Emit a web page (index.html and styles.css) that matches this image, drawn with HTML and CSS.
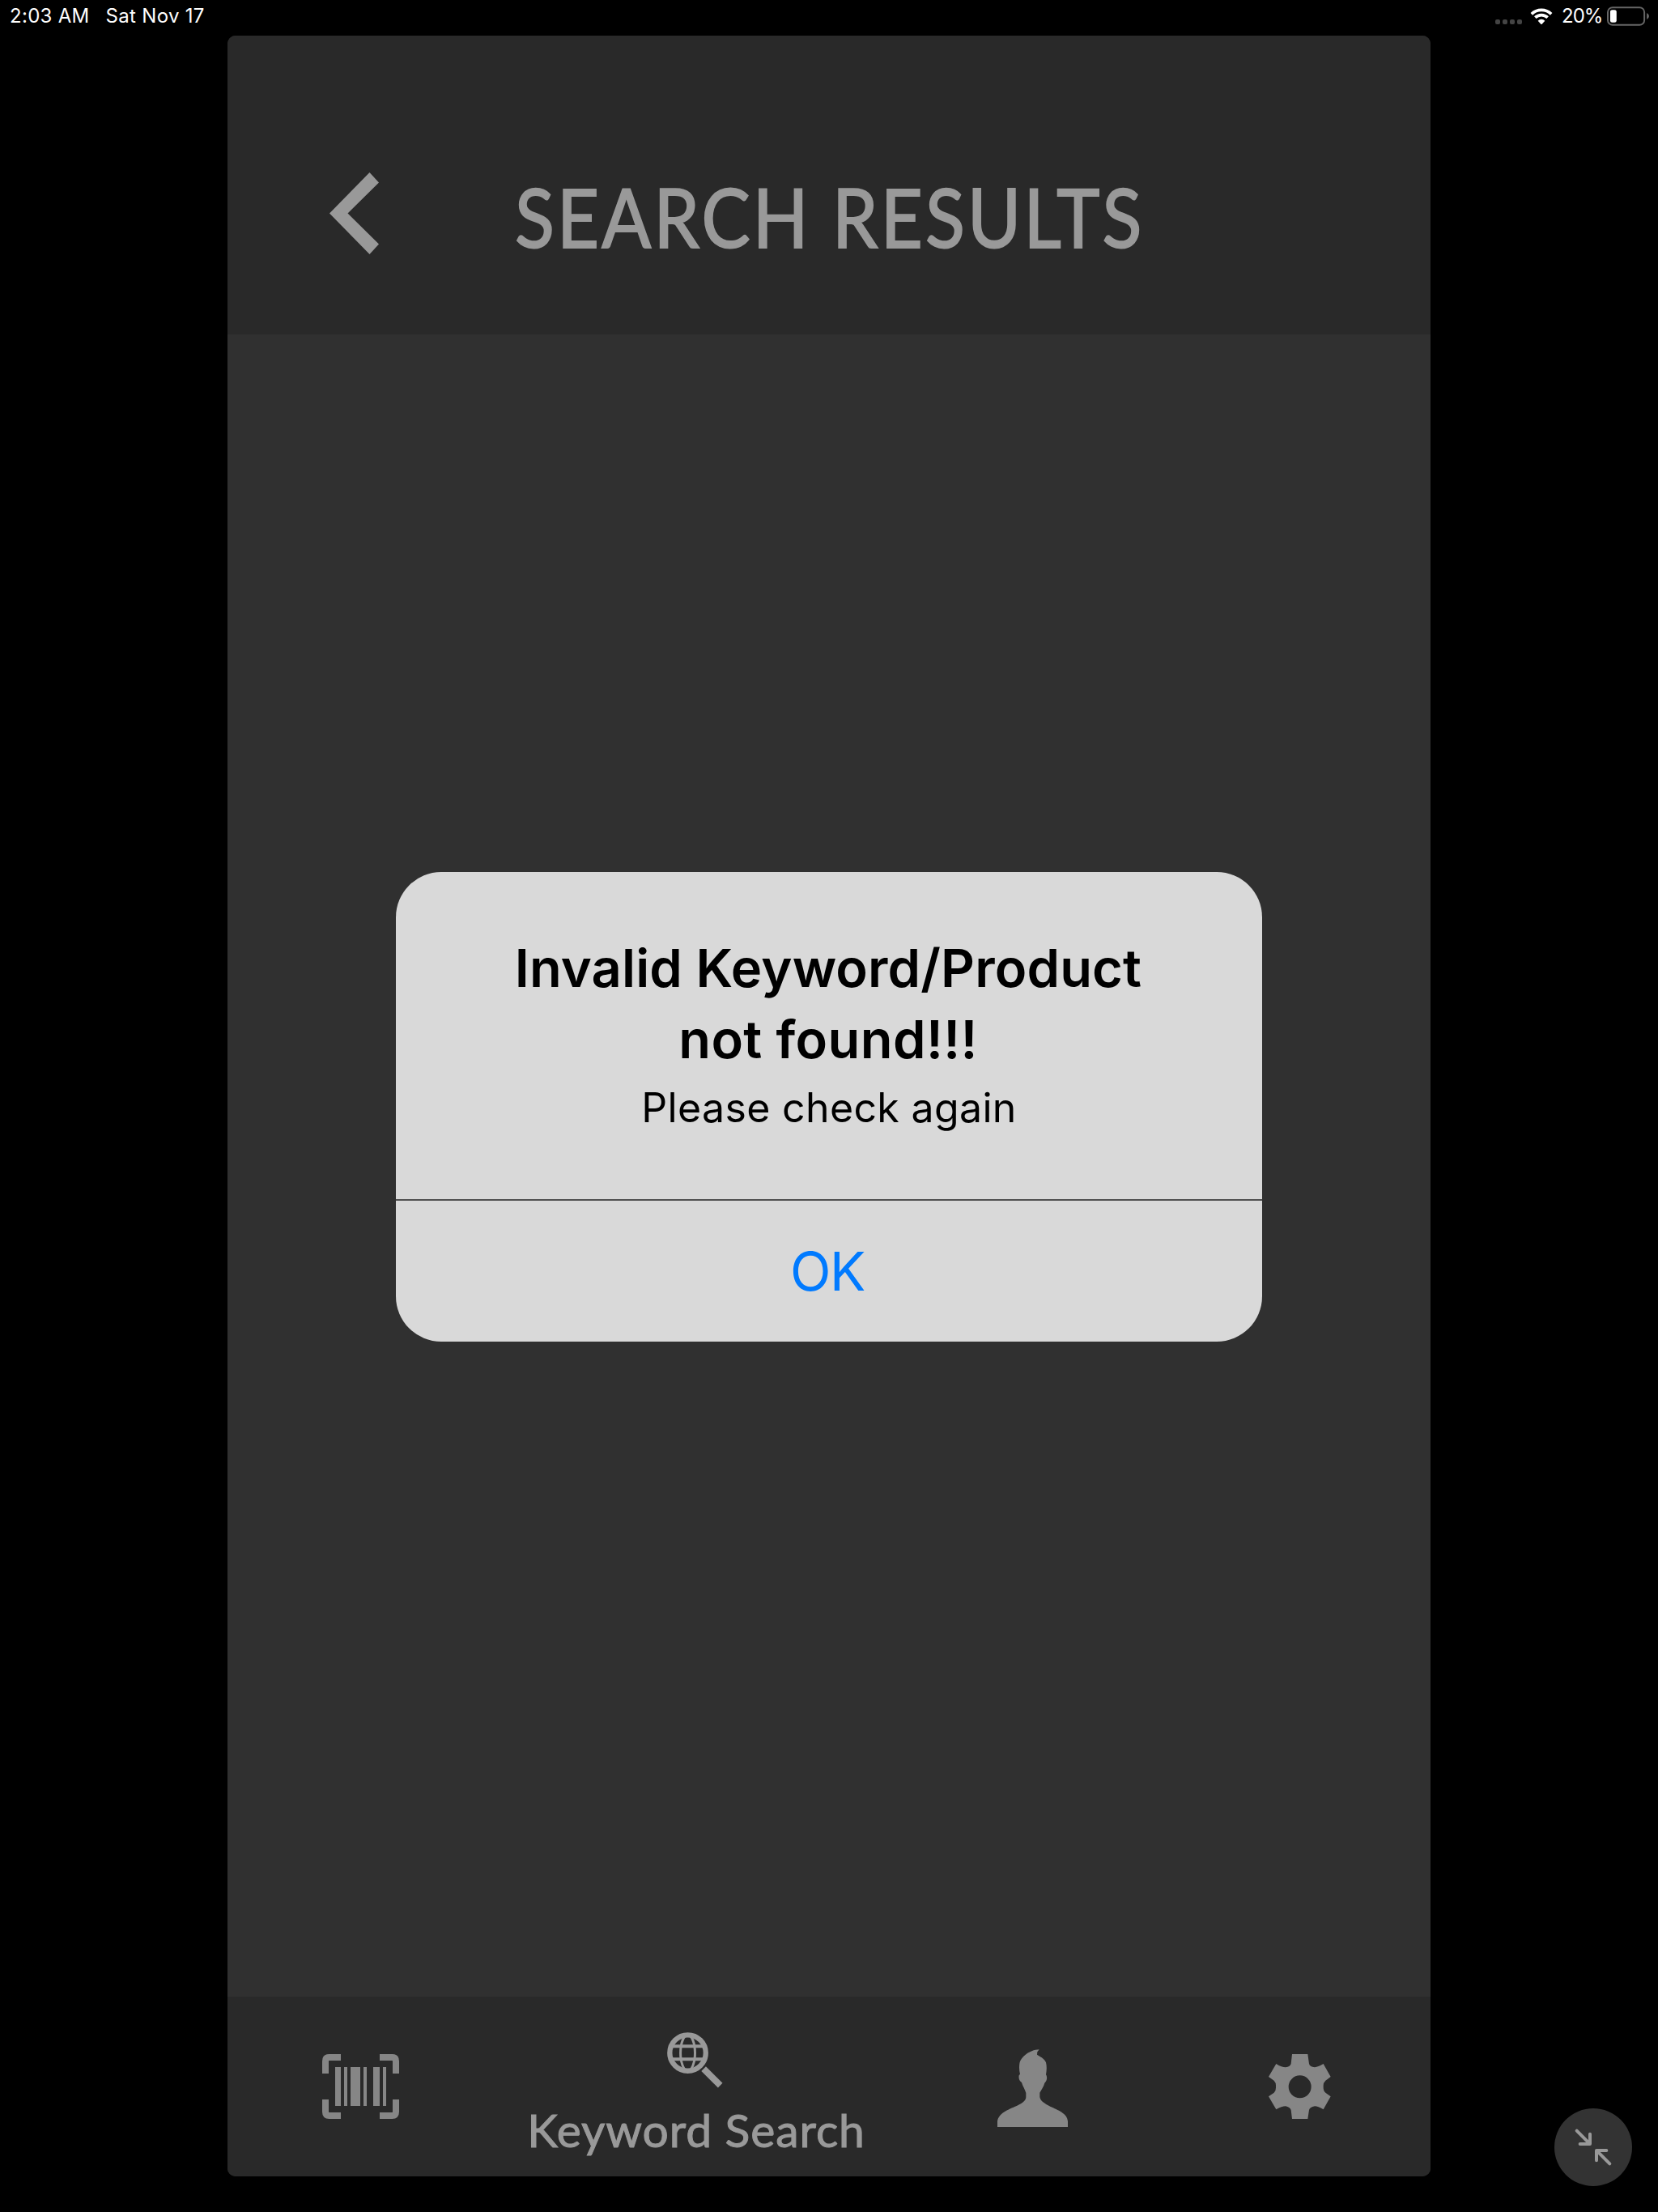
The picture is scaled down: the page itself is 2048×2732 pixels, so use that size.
FILE: index.html
```html
<!DOCTYPE html>
<html lang="en">
<head>
<meta charset="utf-8">
<title>Search Results</title>
<link rel="stylesheet" href="styles.css">
</head>
<body>
<div class="status">
  <span class="status-time">2:03 AM</span>
  <span class="status-date">Sat Nov 17</span>
  <svg class="signal" viewBox="0 0 33 6"><rect width="6" height="6" rx="2"/><rect x="9" width="6" height="6" rx="2"/><rect x="18" width="6" height="6" rx="2"/><rect x="27" width="6" height="6" rx="2"/></svg>
  <svg class="wifi" viewBox="210 30 84 60"><path class="wifi-arc" d="M215.5 52A52 52 0 0 1 288.500 52M229 65A33 33 0 0 1 275 65"/><path class="wifi-dot" d="M239 77A18 18 0 0 1 265 77L254 89Q252 91 250 89Z"/></svg>
  <span class="status-battery">20%</span>
  <svg class="battery" viewBox="0 0 54 24"><rect class="battery-shell" x="1" y="1" width="46" height="22" rx="6"/><rect class="battery-level" x="4" y="4" width="8" height="16" rx="2.500"/><path class="battery-cap" d="M50 8Q53 9.500 53 12T50 16Z"/></svg>
</div>

<div class="app">
  <header class="header">
    <svg class="back" viewBox="0 0 61 101"><path d="M49.500 0L61 12.500L22.500 50.500L61 88.500L49.500 101L0 50.500Z"/></svg>
    <h1 class="title">SEARCH RESULTS</h1>
  </header>
  <main class="content"></main>
  <nav class="tabs">
    <div class="tab">
      <svg class="icon-barcode" viewBox="54 111 285 240"><path class="frame" d="M123 123H80Q66 123 66 137V183M267 123H313Q327 123 327 137V183M66 279V325Q66 339 80 339H123M327 279V325Q327 339 313 339H267"/><path d="M102 159h21v144h-21zM135 159h12v144h-12zM159 159h36v144h-36zM207 159h12v144h-12zM243 159h24v144h-24zM279 159h12v144h-12z"/></svg>
    </div>
    <div class="tab tab-active">
      <svg class="icon-search" viewBox="581 179 208 208"><circle cx="658" cy="256" r="67" stroke-width="19"/><path d="M594 231H722M594 279H722" stroke-width="12"/><ellipse cx="658" cy="256" rx="27" ry="67" stroke-width="9"/><path d="M717 315L779 377" stroke-width="24"/></svg>
      <span class="tab-label">Keyword Search</span>
    </div>
    <div class="tab">
      <svg class="icon-person" viewBox="66 63 261 288"><path d="M66 351V330C70 300 108 286 130 276C155 265 172 255 172 240V225C168 212 160 200 156 186C148 182 144 172 146 160L150 155C146 140 146 120 150 108C158 88 185 70 207 65L221 64L214 73L213 83C228 92 240 98 246 112C250 128 248 145 246 157C252 165 250 180 241 188C238 200 230 212 223 224V240C226 256 240 263 262 275C290 288 325 300 327 330V351Z"/></svg>
    </div>
    <div class="tab">
      <svg class="icon-gear" viewBox="79 80 231 240"><path fill-rule="evenodd" d="M166 80H224L229 116Q232 127 250 129Q262 127 282 116L309 164L290 178Q281 186 282 200Q281 216 290 223L309 237L282 285Q262 273 250 273Q232 276 229 287L224 320H166L162 287Q158 276 142 273Q128 273 107 285L79 237L99 223Q107 216 106 200Q107 186 99 178L79 164L107 116Q128 129 142 129Q158 127 162 116ZM195 159A42 42 0 1 0 195 243A42 42 0 1 0 195 159Z"/></svg>
    </div>
  </nav>

  <div class="overlay">
    <div class="alert" role="alertdialog">
      <div class="alert-body">
        <h2 class="alert-title">Invalid Keyword/Product<br><span class="alert-title-end">not found!!!</span></h2>
        <p class="alert-message">Please check again</p>
      </div>
      <button class="alert-ok">OK</button>
    </div>
  </div>
</div>

<svg class="collapse" viewBox="60 42 288 288"><circle cx="204" cy="186" r="144"/><path d="M143 125L190 172M192 137V174H155M216 235V198H253M218 200L265 247"/></svg>
</body>
</html>
```
FILE: styles.css
```css
* {
  box-sizing: border-box;
}

body {
  margin: 0;
  width: 2048px;
  height: 2732px;
  overflow: hidden;
  position: relative;
  background: #000;
  font-family: Inter, "Liberation Sans", sans-serif;
}

svg {
  display: block;
  flex: none;
}

.status {
  display: flex;
  align-items: center;
  height: 44px;
  padding: 0 10px 4px 12px;
  color: #fff;
  font-size: 24px;
  font-weight: 400;
  line-height: 29px;
  letter-spacing: 0.3px;
  white-space: nowrap;
}

.status span {
  padding-bottom: 1px;
}

.status-date {
  margin-left: 20px;
}

.signal {
  width: 33px;
  height: 6px;
  margin: 14px 10px 0 auto;
  fill: #444;
}

.wifi {
  width: 28px;
  height: 20px;
  margin-right: 11px;
}

.wifi-arc {
  fill: none;
  stroke: #fff;
  stroke-width: 11;
}

.wifi-dot {
  fill: #fff;
}

.status-battery {
  width: 56px;
  letter-spacing: -1px;
}

.battery {
  width: 53px;
  height: 24px;
}

.battery-shell {
  fill: none;
  stroke: #666;
  stroke-width: 2;
}

.battery-level {
  fill: #fff;
}

.battery-cap {
  fill: #666;
}

.app {
  position: relative;
  display: flex;
  flex-direction: column;
  width: 1486px;
  height: 2644px;
  margin-left: 281px;
  border-radius: 10px;
  overflow: hidden;
  background: #303030;
}

.header {
  display: flex;
  align-items: flex-start;
  height: 369px;
  padding: 163px 0 0 126px;
  background: #292929;
}

.back {
  width: 61px;
  height: 101px;
  margin-top: 6px;
  fill: #999;
}

.title {
  margin: 0 0 0 168px;
  color: #999;
  font: 400 100px/120px Lato, "Open Sans", sans-serif;
  letter-spacing: 3.6px;
  white-space: nowrap;
  transform: scaleX(0.9);
  transform-origin: left;
  -webkit-text-stroke: 2px #999;
}

.content {
  flex: 1;
}

.tabs {
  display: grid;
  grid-template-columns: 329px 496px 338px 323px;
  height: 222px;
  background: #292929;
}

.tab {
  display: flex;
  flex-direction: column;
  align-items: center;
  justify-content: center;
  fill: #868686;
}

.tab-active {
  justify-content: flex-start;
  padding-top: 44px;
}

.icon-barcode {
  width: 95px;
  height: 80px;
}

.frame {
  fill: none;
  stroke: #868686;
  stroke-width: 24;
}

.icon-search {
  width: 69px;
  height: 69px;
  fill: none;
  stroke: #999;
}

.tab-label {
  margin: 17px 0 0 4px;
  color: #999;
  font: 400 57px/68px Lato, "Open Sans", sans-serif;
  letter-spacing: 0.9px;
  white-space: nowrap;
  -webkit-text-stroke: 1px #999;
}

.icon-person {
  width: 87px;
  height: 96px;
  margin-top: 4px;
}

.icon-gear {
  width: 77px;
  height: 80px;
  margin-right: 1px;
}

.overlay {
  position: absolute;
  inset: 0;
  display: flex;
  align-items: center;
  justify-content: center;
  padding-top: 2px;
}

.alert {
  display: flex;
  flex-direction: column;
  width: 1070px;
  height: 580px;
  border-radius: 56px;
  overflow: hidden;
  background: #d9d9d9;
  color: #000;
  text-align: center;
}

.alert-body {
  height: 404px;
  padding-top: 75px;
}

.alert-title {
  margin: 0 2px 0 0;
  font-size: 65px;
  font-weight: 600;
  line-height: 88px;
  letter-spacing: 0.15px;
}

.alert-title-end {
  letter-spacing: 0.4px;
}

.alert-message {
  margin: 10px 0 0;
  font-size: 50px;
  line-height: 60px;
  letter-spacing: 0.35px;
}

.alert-ok {
  flex: 1;
  padding: 0 4px 0 0;
  border: 0;
  border-top: 2px solid #505050;
  background: none;
  color: #007aff;
  font: 400 66px/174px Inter, "Liberation Sans", sans-serif;
  letter-spacing: -1.5px;
}

.collapse {
  position: absolute;
  left: 1920px;
  top: 2604px;
  width: 96px;
  height: 96px;
  fill: #333;
}

.collapse path {
  fill: none;
  stroke: #999;
  stroke-width: 12;
  stroke-linecap: round;
  stroke-linejoin: round;
}
```
